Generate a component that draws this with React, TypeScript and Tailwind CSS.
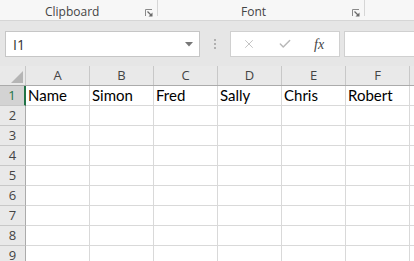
import { X, Check } from "lucide-react";

const columns = ["A", "B", "C", "D", "E", "F", ""];
const firstRow = ["Name", "Simon", "Fred", "Sally", "Chris", "Robert", ""];

function Launcher() {
  return (
    <svg width="8" height="8" viewBox="0 0 8 8" className="block">
      <path d="M0.5 7V0.5H7" fill="none" stroke="#8a8a8a" strokeWidth="1" />
      <path d="M2.5 2.5L6 6" stroke="#6a6a6a" strokeWidth="1.2" />
      <polygon points="3.5,7.5 7.5,7.5 7.5,3.5" fill="#6a6a6a" />
    </svg>
  );
}

export default function App() {
  return (
    <div className="w-[414px] h-[261px] overflow-hidden bg-white font-['Open_Sans',sans-serif]">
      {/* Ribbon group labels */}
      <div className="h-[21px] bg-[#f7f7f7] border-b border-[#d6d6d6] flex text-[12px] text-[#444] leading-none">
        <div className="w-[158px] flex items-start">
          <span className="ml-[45px] mt-[6px]">Clipboard</span>
          <div className="ml-auto mt-[9px] mr-[4px]">
            <Launcher />
          </div>
          <div className="w-px h-[16px] bg-[#d6d6d6]" />
        </div>
        <div className="w-[207px] flex items-start">
          <span className="ml-[83px] mt-[6px]">Font</span>
          <div className="ml-auto mt-[9px] mr-[4px]">
            <Launcher />
          </div>
          <div className="w-px h-[16px] bg-[#d6d6d6]" />
        </div>
      </div>

      {/* Formula bar */}
      <div className="h-[45px] bg-[#e6e6e6] flex items-start pt-[10px]">
        <div className="ml-[5px] w-[195px] h-[26px] bg-white border border-[#c6c6c6] flex items-center pl-[7px] pr-[6px]">
          <span className="text-[14px] text-[#333]">I1</span>
          <svg width="8" height="5" viewBox="0 0 8 5" className="ml-auto">
            <polygon points="0,0 8,0 4,4.5" fill="#777" />
          </svg>
        </div>
        <div className="w-[30px] h-[26px] flex flex-col items-center justify-center gap-[2px]">
          <div className="w-[2px] h-[2px] bg-[#b0b0b0]" />
          <div className="w-[2px] h-[2px] bg-[#b0b0b0]" />
          <div className="w-[2px] h-[2px] bg-[#b0b0b0]" />
        </div>
        <div className="w-[110px] h-[26px] bg-white border border-[#d0d0d0] flex items-center">
          <X className="ml-[11px] w-[14px] h-[14px] text-[#bcbcbc]" strokeWidth={1.5} />
          <Check className="ml-[22px] w-[14px] h-[14px] text-[#b8b8b8]" strokeWidth={2.5} />
          <span className="ml-[22px] font-['Liberation_Serif',serif] italic text-[14px] text-[#444]">
            fx
          </span>
        </div>
        <div className="ml-[4px] flex-1 h-[26px] bg-white border border-[#d0d0d0] border-r-0" />
      </div>

      {/* Sheet */}
      <div className="text-[13px] text-[#444]">
        <div className="flex h-[20px] bg-[#e9e9e9] border-b border-[#ababab]">
          <div className="w-[26px] shrink-0 relative border-r border-[#c8c8c8]">
            <svg width="12" height="12" viewBox="0 0 12 12" className="absolute right-[2px] bottom-[2px]">
              <polygon points="12,0 12,12 0,12" fill="#b5b5b5" />
            </svg>
          </div>
          {columns.map((c, ci) => (
            <div
              key={ci}
              className="w-[64px] shrink-0 border-r border-[#c8c8c8] flex items-center justify-center"
            >
              {c}
            </div>
          ))}
        </div>
        {Array.from({ length: 9 }, (_, i) => i + 1).map((row) => (
          <div key={row} className="flex h-[20px]">
            <div
              className={`w-[26px] shrink-0 flex items-center justify-center border-b ${
                row === 1
                  ? "bg-[#d3d3d3] text-[#217346] border-r-2 border-r-[#217346] border-b-[#c8c8c8]"
                  : "bg-[#e9e9e9] border-r border-r-[#ababab] border-b-[#c8c8c8]"
              }`}
            >
              {row}
            </div>
            {columns.map((_, ci) => (
              <div
                key={ci}
                className="w-[64px] shrink-0 border-r border-b border-[#d9d9d9] flex items-center pl-[2px] font-['Lato',sans-serif] text-[15px] text-black"
              >
                {row === 1 ? firstRow[ci] : ""}
              </div>
            ))}
          </div>
        ))}
      </div>
    </div>
  );
}
